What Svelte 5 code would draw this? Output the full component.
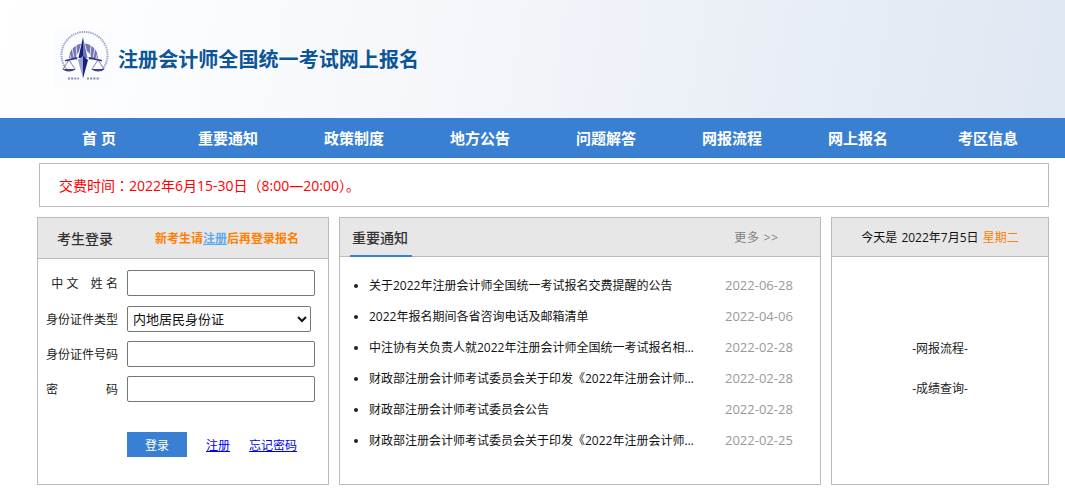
<script>
  const nav = ['首 页', '重要通知', '政策制度', '地方公告', '问题解答', '网报流程', '网上报名', '考区信息'];
  const news = [
    ['关于2022年注册会计师全国统一考试报名交费提醒的公告', '2022-06-28'],
    ['2022年报名期间各省咨询电话及邮箱清单', '2022-04-06'],
    ['中注协有关负责人就2022年注册会计师全国统一考试报名相关问题答记者问', '2022-02-28'],
    ['财政部注册会计师考试委员会关于印发《2022年注册会计师全国统一考试报名简章》的通知', '2022-02-28'],
    ['财政部注册会计师考试委员会公告', '2022-02-28'],
    ['财政部注册会计师考试委员会关于印发《2022年注册会计师全国统一考试大纲》的通知', '2022-02-25']
  ];
</script>

<div class="page">
  <header class="banner">
    <svg class="logo" width="60" height="60" viewBox="0 0 60 60" aria-hidden="true">
      <rect width="60" height="60" fill="#fbfcfe" />
      <path d="M14 43 A23 23 0 1 1 47 43" fill="none" stroke="#6a6ea8" stroke-width="2" stroke-dasharray="1.3 .9" opacity=".65" />
      <path d="M15 30 A14.500 14.500 0 0 1 44 30 L37 30 A7.500 7.500 0 0 0 22 30 Z" fill="#7477b4" />
      <g stroke="#f7f8fc" stroke-width=".8">
        <path d="M17 30 L15 25M20 30 L18 20M23 29 L22 17M36 29 L37 17M39 30 L41 20M42 30 L44 25" />
      </g>
      <path d="M11 32 Q29.500 25 48 32 L48 33.500 Q29.500 28 11 33.500 Z" fill="#34358c" />
      <g fill="none" stroke="#4a4c98" stroke-width=".7">
        <path d="M15 32 L9 41 M15 32 L21 41 M44 32 L38 41 M44 32 L50 41" />
      </g>
      <path d="M8 41 H22 Q15 46 8 41 Z M37 41 H51 Q44 46 37 41 Z" fill="#3b3d90" />
      <path d="M29 8 L35 31 L23 31 Z" fill="#fbfcfe" />
      <path d="M29 9 L33.500 30 L29 30 Z" fill="#6c72b2" />
      <path d="M29 9 L24.500 30 L29 30 Z" fill="#141f7c" />
      <path d="M29 50.500 L24 32 L29 28 Z" fill="#9ba1cc" />
      <path d="M29 50.500 L34 32 L29 28 Z" fill="#14207c" />
      <path d="M14 50.500 H25 M33 50.500 H46" stroke="#55559a" stroke-width="1.800" stroke-dasharray="2 1.200" opacity=".7" />
    </svg>
    <h1>注册会计师全国统一考试网上报名</h1>
  </header>

  <nav class="nav">
    {#each nav as item}
      <a href="#top">{item}</a>
    {/each}
  </nav>

  <div class="notice">交费时间<span class="mid">：</span>2022年6月15-30日（8:00—20:00）。</div>

  <main class="columns">
    <section class="panel login">
      <div class="head login-head">
        <strong>考生登录</strong>
        <span class="hint">新考生请<u>注册</u>后再登录报名</span>
      </div>
      <form class="form">
        <div class="row"><span class="label spaced">中 文&nbsp;&nbsp;&nbsp; 姓 名</span><input type="text" /></div>
        <div class="row">
          <span class="label">身份证件类型</span>
          <select><option>内地居民身份证</option></select>
        </div>
        <div class="row"><span class="label">身份证件号码</span><input type="text" /></div>
        <div class="row"><span class="label between"><i>密</i><i>码</i></span><input type="password" /></div>
        <div class="actions">
          <button type="button">登录</button>
          <a href="#top">注册</a>
          <a href="#top">忘记密码</a>
        </div>
      </form>
    </section>

    <section class="panel notices">
      <div class="head news-head">
        <strong>重要通知</strong>
        <span class="more">更多 &gt;&gt;</span>
      </div>
      <ul>
        {#each news as [title, date]}
          <li><span class="title">{title}</span><span class="date">{date}</span></li>
        {/each}
      </ul>
    </section>

    <section class="panel today">
      <div class="head today-head">今天是 2022年7月5日 <em>星期二</em></div>
      <div class="links">
        <span>-网报流程-</span>
        <span>-成绩查询-</span>
      </div>
    </section>
  </main>
</div>

<style>
  :global(body) {
    margin: 0;
    background: #fff;
  }
  .page {
    width: 1065px;
    height: 491px;
    overflow: hidden;
    font-family: "Open Sans", "Noto Sans CJK SC", sans-serif;
    font-size: 12px;
    color: #222;
  }
  .banner {
    height: 118px;
    box-sizing: border-box;
    padding: 28px 0 0 54px;
    display: flex;
    align-items: flex-start;
    background: linear-gradient(100deg, #ffffff 0%, #f5f7fb 40%, #dfe7f2 100%);
  }
  .logo {
    flex: none;
    filter: blur(0.3px);
  }
  h1 {
    margin: 16px 0 0 4px;
    font-size: 20px;
    line-height: 32px;
    font-weight: 700;
    color: #0b5598;
    letter-spacing: 0.07px;
  }
  .nav {
    height: 40px;
    background: #397fd2;
    display: flex;
    padding-left: 39px;
  }
  .nav a {
    width: 126px;
    text-align: center;
    line-height: 40px;
    font-size: 15px;
    font-weight: 700;
    color: #fff;
    text-decoration: none;
  }
  .nav a:first-child {
    text-indent: -6px;
  }
  .nav a:last-child {
    text-indent: 8px;
  }
  .notice {
    margin: 5px 16px 0 39px;
    height: 42px;
    border: 1px solid #bbb;
    padding-left: 19px;
    line-height: 43px;
    font-size: 14px;
    color: #f00;
  }
  .mid {
    font-family: "Noto Sans CJK TC", sans-serif;
  }
  .columns {
    display: flex;
    align-items: flex-start;
    margin: 10px 0 0 37px;
    gap: 9px;
  }
  .panel {
    box-sizing: border-box;
    height: 268px;
    border: 1px solid #bbb;
  }
  .login {
    width: 292px;
  }
  .notices {
    width: 482px;
    margin-left: 1px;
  }
  .today {
    width: 218px;
    margin-left: 1px;
  }
  .head {
    background: #e7e7e7;
    border-bottom: 1px solid #bbb;
    box-sizing: border-box;
    height: 39px;
    display: flex;
    align-items: center;
  }
  .head strong {
    font-weight: 500;
    font-size: 14px;
    color: #333;
  }
  .login-head {
    height: 41px;
    padding-left: 19px;
  }
  .hint {
    margin-left: 42px;
    font-weight: 700;
    color: #ff8000;
  }
  .hint u {
    color: #62a8ee;
  }
  .form {
    padding: 11px 0 0 8px;
  }
  .row {
    display: flex;
    align-items: center;
    height: 26px;
    margin-bottom: 9px;
  }
  .row:first-child {
    margin-bottom: 10px;
  }
  .label {
    box-sizing: border-box;
    width: 72px;
    margin-right: 9px;
    text-align: right;
    color: #222;
  }
  .spaced {
    white-space: nowrap;
  }
  .between {
    display: flex;
    justify-content: space-between;
  }
  .between i {
    font-style: normal;
  }
  input,
  select {
    box-sizing: border-box;
    height: 26px;
    border: 1px solid #767676;
    border-radius: 2px;
    background: #fff;
    font-family: inherit;
    margin: 0;
    outline: none;
  }
  input {
    width: 188px;
  }
  select {
    width: 184px;
    font-size: 13px;
    padding-left: 1px;
    color: #111;
  }
  .actions {
    display: flex;
    align-items: center;
    margin: 30px 0 0 81px;
    height: 25px;
    gap: 19px;
  }
  .actions a {
    color: #00e;
  }
  button {
    width: 60px;
    height: 25px;
    border: 0;
    padding: 1px 0 0;
    background: #397fd2;
    color: #fff;
    font: inherit;
  }
  .news-head {
    justify-content: space-between;
    position: relative;
    padding: 0 41px 0 12px;
  }
  .news-head::after {
    content: "";
    position: absolute;
    left: 10px;
    bottom: -1px;
    width: 62px;
    height: 2px;
    background: #397fd2;
  }
  .more {
    color: #808080;
    letter-spacing: 0.8px;
  }
  ul {
    margin: 13px 0 0;
    padding: 0 0 0 29px;
  }
  li {
    height: 31px;
    line-height: 31px;
    white-space: nowrap;
  }
  .title {
    display: inline-block;
    width: 326px;
    margin-right: 30px;
    overflow: hidden;
    text-overflow: ellipsis;
    vertical-align: top;
    color: #111;
  }
  .date {
    font-size: 13px;
    color: #999;
    vertical-align: top;
  }
  .today-head {
    justify-content: center;
    color: #111;
    white-space: pre;
    word-spacing: 1px;
  }
  .today-head em {
    font-style: normal;
    color: #ff7f00;
  }
  .links {
    display: flex;
    flex-direction: column;
    align-items: center;
    padding-top: 82px;
    gap: 22px;
    color: #222;
  }
</style>
